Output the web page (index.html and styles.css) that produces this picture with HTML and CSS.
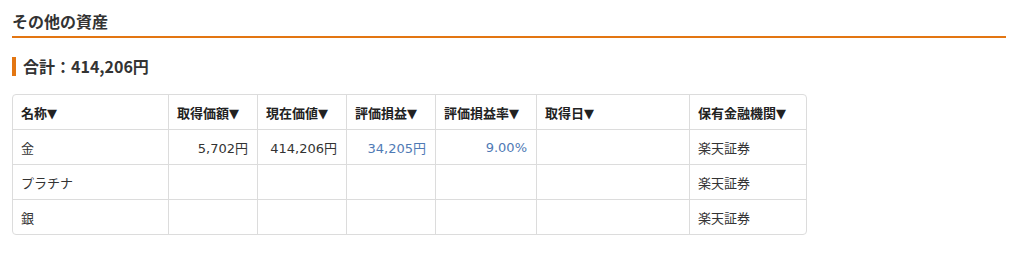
FILE: index.html
```html
<!DOCTYPE html>
<html lang="ja">
<head>
<meta charset="utf-8">
<title>その他の資産</title>
<link rel="stylesheet" href="styles.css">
</head>
<body>
<div class="page">
  <h2 class="title">その他の資産</h2>
  <h3 class="total">合計：414,206円</h3>
  <div class="grid" role="table">
    <div class="row head" role="row">
      <div class="cell">名称▼</div>
      <div class="cell">取得価額▼</div>
      <div class="cell">現在価値▼</div>
      <div class="cell">評価損益▼</div>
      <div class="cell">評価損益率▼</div>
      <div class="cell">取得日▼</div>
      <div class="cell">保有金融機関▼</div>
    </div>
    <div class="row" role="row">
      <div class="cell">金</div>
      <div class="cell num">5,702円</div>
      <div class="cell num">414,206円</div>
      <div class="cell num blue">34,205円</div>
      <div class="cell num blue">9.00%</div>
      <div class="cell"></div>
      <div class="cell">楽天証券</div>
    </div>
    <div class="row" role="row">
      <div class="cell">プラチナ</div>
      <div class="cell num"></div>
      <div class="cell num"></div>
      <div class="cell num"></div>
      <div class="cell num"></div>
      <div class="cell"></div>
      <div class="cell">楽天証券</div>
    </div>
    <div class="row last" role="row">
      <div class="cell">銀</div>
      <div class="cell num"></div>
      <div class="cell num"></div>
      <div class="cell num"></div>
      <div class="cell num"></div>
      <div class="cell"></div>
      <div class="cell">楽天証券</div>
    </div>
  </div>
</div>
</body>
</html>
```

FILE: styles.css
```css
html, body {
  margin: 0;
  padding: 0;
  background: #fff;
}
body {
  font-family: "Noto Sans CJK JP", "Noto Sans", sans-serif;
  color: #333;
}
.page {
  padding: 9px 9px 0 12px;
}
.title {
  margin: 0;
  font-size: 16px;
  line-height: 24px;
  font-weight: bold;
  color: #333;
  padding-bottom: 3px;
  border-bottom: 2px solid #e37612;
}
.total {
  margin: 19px 0 0 0;
  font-size: 16px;
  line-height: 19px;
  font-weight: bold;
  color: #333;
  border-left: 4px solid #e37612;
  padding-left: 7px;
}
.grid {
  margin-top: 18px;
  width: 793px;
  border: 1px solid #dcdcdc;
  border-radius: 4px;
  overflow: hidden;
  font-family: "DejaVu Sans", "Noto Sans CJK JP", sans-serif;
  font-size: 13px;
}
.row {
  display: grid;
  grid-template-columns: 156px 89px 89px 89px 101px 153px 116px;
  height: 35px;
  box-sizing: border-box;
  border-bottom: 1px solid #dcdcdc;
}
.row.last {
  height: 34px;
  border-bottom: none;
}
.cell {
  box-sizing: border-box;
  border-right: 1px solid #dcdcdc;
  padding: 0 9px 0 8px;
  display: flex;
  align-items: center;
  white-space: nowrap;
}
.cell:last-child {
  border-right: none;
}
.head .cell {
  font-weight: bold;
  color: #222;
}
.num {
  justify-content: flex-end;
}
.blue {
  color: #4f7ab5;
}
```
